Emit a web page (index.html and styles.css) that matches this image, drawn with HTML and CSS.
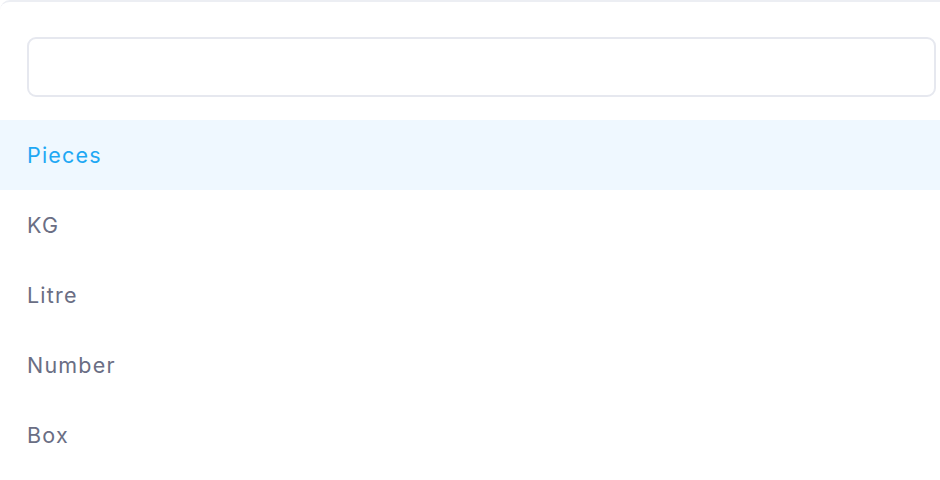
FILE: index.html
```html
<!DOCTYPE html>
<html>
<head>
<meta charset="utf-8">
<link rel="stylesheet" href="styles.css">
</head>
<body>
<div class="card">
  <div class="search-wrap"><input class="search" type="text"></div>
  <ul class="options">
    <li class="option active">Pieces</li>
    <li class="option">KG</li>
    <li class="option">Litre</li>
    <li class="option">Number</li>
    <li class="option">Box</li>
  </ul>
</div>
</body>
</html>
```
FILE: styles.css
```css
html, body { margin: 0; padding: 0; background: #fff; }
body { width: 940px; height: 480px; overflow: hidden; font-family: "Inter", "Open Sans", sans-serif; }
.card {
  height: 480px;
  border-top: 2px solid #eceef3;
  border-top-left-radius: 10px;
  box-sizing: border-box;
  background: #fff;
}
.search-wrap { padding: 35px 4px 23px 27px; }
.search {
  display: block;
  width: 909px;
  height: 60px;
  box-sizing: border-box;
  border: 2px solid #e6e8ef;
  border-radius: 9px;
  outline: none;
  background: #fff;
}
.options { list-style: none; margin: 0; padding: 0; }
.option {
  height: 70px;
  display: flex;
  align-items: center;
  padding-left: 27px;
  box-sizing: border-box;
  font-size: 21.5px;
  letter-spacing: 1.2px;
  color: #6a6e84;
}
.option.active { background: #eff8ff; color: #1ea8f4; }
```
